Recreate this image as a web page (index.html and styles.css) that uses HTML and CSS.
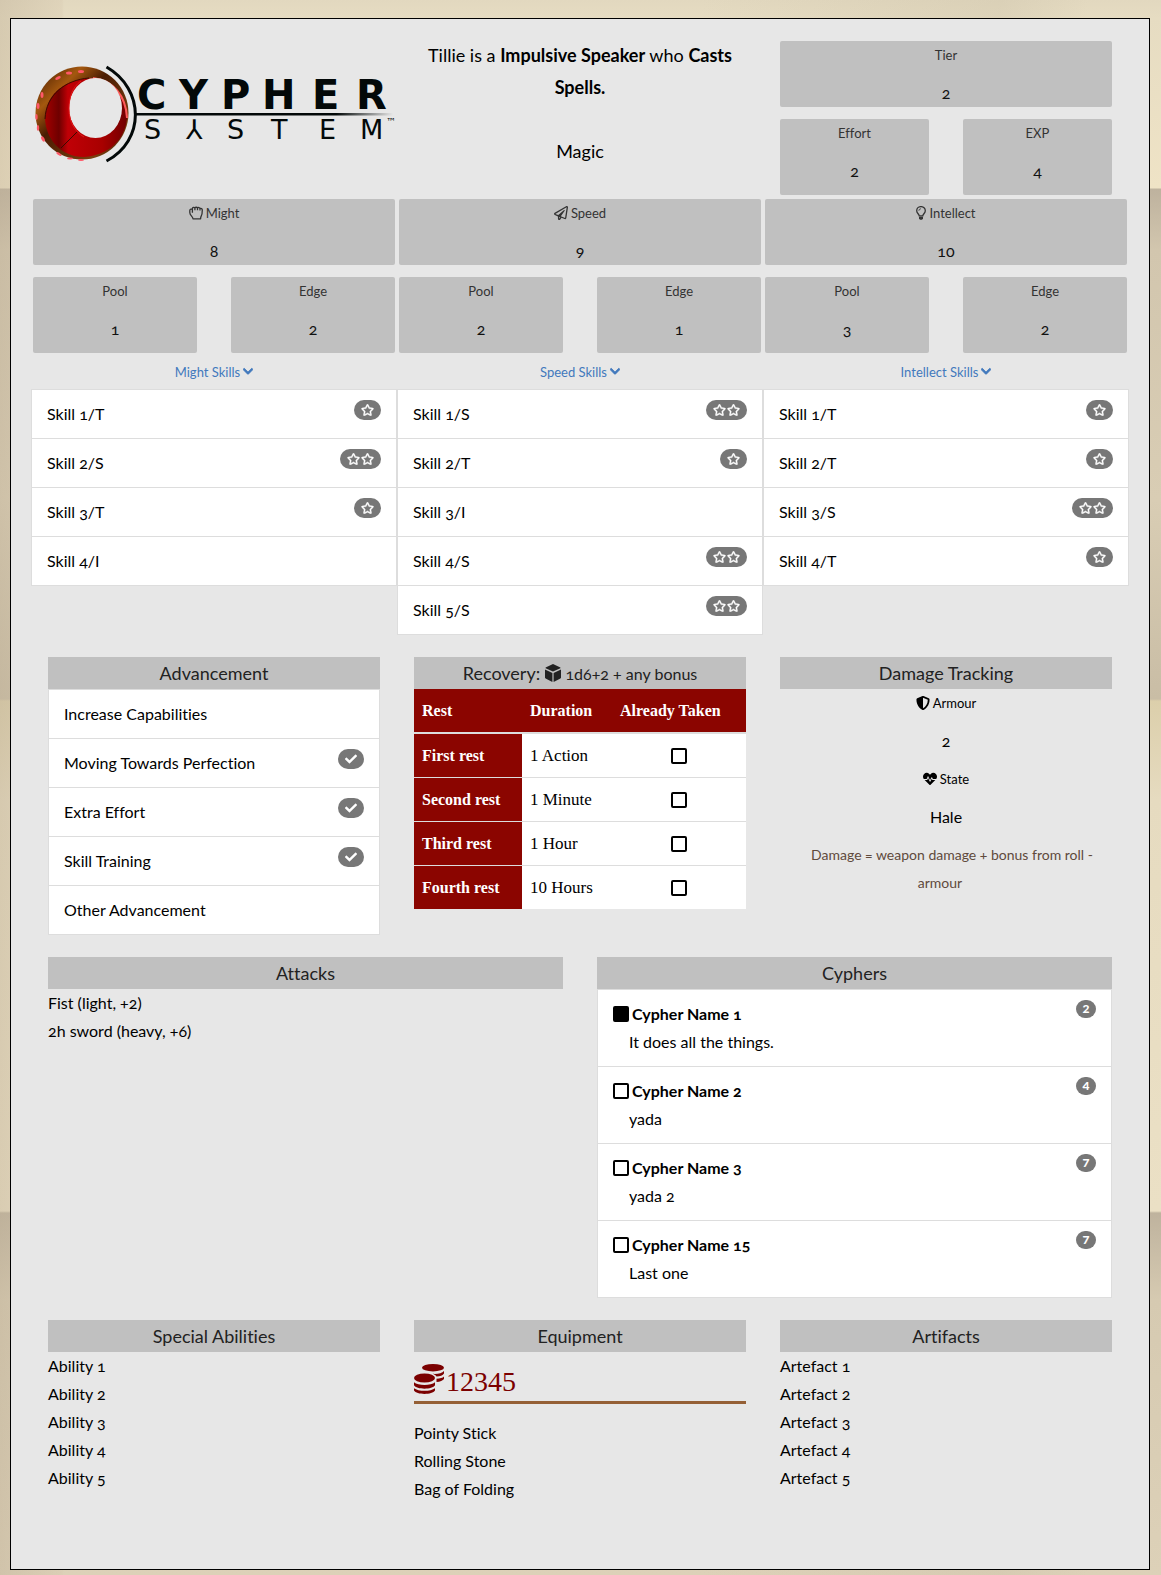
FILE: index.html
```html
<!DOCTYPE html>
<html lang="en">
<head>
<meta charset="utf-8">
<meta name="viewport" content="width=device-width, initial-scale=1">
<title>Cypher System Character Sheet</title>
<link rel="stylesheet" href="styles.css">
</head>
<body>
<svg class="sprite" aria-hidden="true">
  <symbol id="star" viewBox="0 0 576 512"><path stroke="currentColor" stroke-width="20" d="M528.1 171.5L382 150.2 316.7 17.8c-11.7-23.6-45.6-23.9-57.4 0L194 150.2 47.9 171.5c-26.2 3.8-36.7 36.1-17.7 54.6l105.7 103-25 145.5c-4.5 26.3 23.2 46 46.4 33.7L288 439.6l130.7 68.7c23.2 12.2 50.9-7.4 46.4-33.7l-25-145.5 105.7-103c19-18.5 8.5-50.8-17.7-54.6zM388.6 312.3l23.7 138.4L288 385.4l-124.3 65.3 23.7-138.4-100.6-98 139-20.2 62.2-126 62.2 126 139 20.2-100.6 98z"/></symbol>
  <symbol id="check" viewBox="0 0 512 512"><path d="M173.898 439.404l-166.4-166.4c-9.997-9.997-9.997-26.206 0-36.204l36.203-36.204c9.997-9.998 26.207-9.998 36.204 0L192 312.69 432.095 72.596c9.997-9.997 26.207-9.997 36.204 0l36.203 36.204c9.997 9.997 9.997 26.206 0 36.204l-294.4 294.401c-9.998 9.997-26.207 9.997-36.204-.001z"/></symbol>
  <symbol id="chevron" viewBox="0 0 448 512"><path stroke="currentColor" stroke-width="34" d="M207.029 351.476L12.686 157.132c-9.373-9.373-9.373-24.569 0-33.941l22.667-22.667c9.357-9.357 24.522-9.375 33.901-.04L224 254.505l154.745-154.021c9.379-9.335 24.544-9.317 33.901.04l22.667 22.667c9.373 9.373 9.373 24.569 0 33.941L240.971 351.476c-9.373 9.372-24.569 9.372-33.942 0z"/></symbol>
  <symbol id="shield" viewBox="0 0 512 512"><path d="M466.5 83.7l-192-80a48.15 48.15 0 0 0-36.9 0l-192 80C27.7 91.1 16 108.6 16 128c0 198.5 114.5 335.7 221.5 380.3 11.8 4.9 25.1 4.9 36.9 0C360.1 472.6 496 349.3 496 128c0-19.4-11.7-36.9-29.5-44.3zM256.1 446.3l-.1-381 175.9 73.3c-3.3 151.4-82.1 261.1-175.8 307.7z"/></symbol>
  <symbol id="heartbeat" viewBox="0 0 512 512"><path d="M320.2 243.8l-49.7 99.4c-6 12.1-23.4 11.7-28.9-.6l-56.9-126.3-30 71.7H60.6l182.5 186.5c7.1 7.3 18.6 7.3 25.7 0L451.4 288H342.3l-22.1-44.2zM473.7 73.9l-2.4-2.5c-51.5-52.6-135.8-52.6-187.4 0L256 100l-27.9-28.5c-51.5-52.7-135.9-52.7-187.4 0l-2.4 2.4C-10.4 123.7-12.5 203 31 256h102.4l35.9-86.2c5.4-12.9 23.6-13.1 29.3-.4l58.2 129.3 49-97.9c5.9-11.8 22.7-11.8 28.6 0l27.6 55.2H481c43.5-53 41.4-132.3-7.3-182.1z"/></symbol>
  <symbol id="plane" viewBox="0 0 512 512"><path d="M440 6.5L24 246.4c-34.4 19.9-31.1 70.8 5.7 85.9L144 379.6V464c0 46.4 59.2 65.5 86.6 28.6l43.8-59.1 111.9 46.2c5.9 2.4 12.1 3.6 18.3 3.6 8.2 0 16.3-2.1 23.6-6.2 12.8-7.2 21.6-20 23.9-34.5l59.4-387.2c6.1-40.1-36.9-68.8-71.5-48.9zM192 464v-64.6l36.6 15.1L192 464zm212.6-28.7l-153.8-63.5L391 169.5c10.7-15.5-9.5-33.5-23.7-21.2L155.8 332.6 48 288 464 48l-59.4 387.3z"/></symbol>
  <symbol id="fist" viewBox="0 0 14 14"><path d="M4 12.800C4 10.600.8 9.400.8 6.500V4.500c0-1.500 1.900-1.800 2.600-.8V2.500C3.500 1.200 5.300 1 5.900 2c.5-1 2.200-1 2.600 0 .6-.9 2.300-.6 2.500.6.9-.5 2.300 0 2.300 1.400 0 3.400-.1 4.500-1.100 6.100-.4.700-.6 1.500-.6 2.700zM5.900 2v2.300M8.500 2v2.300M11 2.600v1.800M3.400 3.700v3" fill="none" stroke="currentColor" stroke-width="1.300" stroke-linejoin="round"/></symbol>
  <symbol id="bulb" viewBox="0 0 10 14"><path d="M3.200 9.800C3 8 .7 7.200.7 4.700A4.300 4.100 0 0 1 9.300 4.700C9.300 7.200 7 8 6.800 9.800z" fill="none" stroke="currentColor" stroke-width="1.300"/><path d="M2.900 4.700c0-1.100.8-1.900 2-1.900" fill="none" stroke="currentColor" stroke-width=".9"/><path d="M3 10.800h4v1.600L6 13.800H4L3 12.400z"/></symbol>
  <symbol id="cube" viewBox="0 0 16 18"><path d="M8 0l7.400 3.400v.8L8 7.600.6 4.200v-.8zM0 5.400l7.400 3.500V18L.6 14.600 0 13.800zM16 5.400L8.600 8.900V18l6.800-3.400.6-.8z"/></symbol>
  <symbol id="coins" viewBox="0 0 30 30"><ellipse cx="19" cy="3.700" rx="11" ry="3.700"/><path d="M30 7v2.500c-1 1.800-4 2.900-7.500 3-.8-1.200-2-2-4-2.700 5 .4 9.500-.5 11.500-2.800zM30 12.500v2.500c-1 1.600-4 2.700-7.500 3v-3.200c3.500-.2 6.300-1 7.500-2.300z"/><ellipse cx="10.500" cy="14" rx="10.500" ry="4.600"/><path d="M0 18.300c4 3.600 17 3.600 21 0v3c-2.500 4.500-18.500 4.500-21 0zM0 24.300c4 3.400 17 3.400 21 0v2.300c-2.500 4.500-18.500 4.500-21 0z"/></symbol>
</svg>

<main class="sheet">
  <header class="columns">
    <div class="brand">
      <svg class="logo" viewBox="0 0 362 146" role="img" aria-label="Cypher System">
        <defs>
          <linearGradient id="bronze" x1="0" y1="0" x2="1" y2="1"><stop offset="0" stop-color="#3a1400"/><stop offset=".25" stop-color="#a4580f"/><stop offset=".42" stop-color="#4a1c02"/><stop offset=".8" stop-color="#7a3e0e"/><stop offset="1" stop-color="#2a0c00"/></linearGradient>
          <linearGradient id="core" x1="0" y1="0" x2="1" y2="0"><stop offset="0" stop-color="#a30000"/><stop offset=".17" stop-color="#6e0000"/><stop offset=".28" stop-color="#c00006"/><stop offset=".7" stop-color="#a80000"/><stop offset="1" stop-color="#700000"/></linearGradient>
          <linearGradient id="fade" x1="0" y1="0" x2="1" y2="0"><stop offset=".78" stop-color="#030909"/><stop offset="1" stop-color="#030909" stop-opacity="0"/></linearGradient>
        </defs>
        <circle cx="49" cy="72" r="46.500" fill="url(#bronze)"/>
        <path d="M12 76C14 50 34 38 60 37c20 2 33 18 34 40-2 22-18 37-43 39C28 116 12 98 12 76z" fill="url(#core)"/>
        <path d="M60 37c20 2 33 18 34 40" fill="none" stroke="#ff5a5a" stroke-width="2"/>
        <path d="M12 78C13 54 32 39 56 37M28 107L44 91" fill="none" stroke="#3a0c00" stroke-width="1"/>
        <ellipse cx="62.500" cy="67" rx="26.500" ry="30" fill="#e7e7e7"/>
        <path d="M48 40C39 46 36 57 36 68c0 13 6 23 15 28" fill="none" stroke="#e01818" stroke-width="1"/>
        <g fill="#ff5868"><ellipse cx="25" cy="37" rx="3" ry="1.500" transform="rotate(-25 25 37)"/><ellipse cx="36" cy="32" rx="3" ry="1.500"/><ellipse cx="48" cy="30.500" rx="3" ry="1.500"/><ellipse cx="9" cy="54" rx="1.500" ry="3"/><ellipse cx="5" cy="65" rx="1.500" ry="3"/><ellipse cx="3.500" cy="76" rx="1.200" ry="3"/><ellipse cx="5" cy="87" rx="1.200" ry="3"/><ellipse cx="10" cy="98" rx="1.500" ry="3" transform="rotate(-30 10 98)"/><ellipse cx="26" cy="113" rx="3" ry="1.200" transform="rotate(30 26 113)"/><ellipse cx="37" cy="117.500" rx="3" ry="1"/><ellipse cx="48" cy="119" rx="3" ry="1"/></g>
        <path d="M73.500 26C112 48 112 100 73.500 120" fill="none" stroke="#030909" stroke-width="3"/>
        <path d="M102 72h258v2.500H102z" fill="url(#fade)"/>
        <text class="logo-top" x="104 146 188 229 279 323" y="68">CYPHER</text>
        <text class="logo-bottom" x="111 153 194 238 286 327" y="98">S⅄STEM</text>
        <text class="logo-mark" x="353" y="84">™</text>
      </svg>
    </div>
    <div class="intro">
      <p>Tillie is a <strong>Impulsive Speaker</strong> who <strong>Casts Spells.</strong></p>
      <p>Magic</p>
    </div>
    <div class="rank">
      <dl class="tile"><dt>Tier</dt><dd>2</dd></dl>
      <div class="pair">
        <dl class="tile tile-tall"><dt>Effort</dt><dd>2</dd></dl>
        <dl class="tile tile-tall"><dt>EXP</dt><dd>4</dd></dl>
      </div>
    </div>
  </header>

  <section class="columns">
    <div>
      <div class="stat">
        <dl class="tile"><dt><svg class="icon"><use href="#fist"/></svg> Might</dt><dd>8</dd></dl>
        <div class="pair">
          <dl class="tile tile-tall"><dt>Pool</dt><dd>1</dd></dl>
          <dl class="tile tile-tall"><dt>Edge</dt><dd>2</dd></dl>
        </div>
      </div>
      <a class="toggle" href="#might-skills">Might Skills <svg class="icon icon-small"><use href="#chevron"/></svg></a>
      <ul class="list" id="might-skills">
        <li>Skill 1/T<span class="badge"><svg><use href="#star"/></svg></span></li>
        <li>Skill 2/S<span class="badge"><svg><use href="#star"/></svg><svg><use href="#star"/></svg></span></li>
        <li>Skill 3/T<span class="badge"><svg><use href="#star"/></svg></span></li>
        <li>Skill 4/I</li>
      </ul>
    </div>
    <div>
      <div class="stat">
        <dl class="tile"><dt><svg class="icon"><use href="#plane"/></svg> Speed</dt><dd>9</dd></dl>
        <div class="pair">
          <dl class="tile tile-tall"><dt>Pool</dt><dd>2</dd></dl>
          <dl class="tile tile-tall"><dt>Edge</dt><dd>1</dd></dl>
        </div>
      </div>
      <a class="toggle" href="#speed-skills">Speed Skills <svg class="icon icon-small"><use href="#chevron"/></svg></a>
      <ul class="list" id="speed-skills">
        <li>Skill 1/S<span class="badge"><svg><use href="#star"/></svg><svg><use href="#star"/></svg></span></li>
        <li>Skill 2/T<span class="badge"><svg><use href="#star"/></svg></span></li>
        <li>Skill 3/I</li>
        <li>Skill 4/S<span class="badge"><svg><use href="#star"/></svg><svg><use href="#star"/></svg></span></li>
        <li>Skill 5/S<span class="badge"><svg><use href="#star"/></svg><svg><use href="#star"/></svg></span></li>
      </ul>
    </div>
    <div>
      <div class="stat">
        <dl class="tile"><dt><svg class="icon icon-small"><use href="#bulb"/></svg> Intellect</dt><dd>10</dd></dl>
        <div class="pair">
          <dl class="tile tile-tall"><dt>Pool</dt><dd>3</dd></dl>
          <dl class="tile tile-tall"><dt>Edge</dt><dd>2</dd></dl>
        </div>
      </div>
      <a class="toggle" href="#intellect-skills">Intellect Skills <svg class="icon icon-small"><use href="#chevron"/></svg></a>
      <ul class="list" id="intellect-skills">
        <li>Skill 1/T<span class="badge"><svg><use href="#star"/></svg></span></li>
        <li>Skill 2/T<span class="badge"><svg><use href="#star"/></svg></span></li>
        <li>Skill 3/S<span class="badge"><svg><use href="#star"/></svg><svg><use href="#star"/></svg></span></li>
        <li>Skill 4/T<span class="badge"><svg><use href="#star"/></svg></span></li>
      </ul>
    </div>
  </section>

  <div class="panels thirds">
    <section>
      <h2>Advancement</h2>
      <ul class="list">
        <li>Increase Capabilities</li>
        <li>Moving Towards Perfection<span class="badge"><svg class="tick"><use href="#check"/></svg></span></li>
        <li>Extra Effort<span class="badge"><svg class="tick"><use href="#check"/></svg></span></li>
        <li>Skill Training<span class="badge"><svg class="tick"><use href="#check"/></svg></span></li>
        <li>Other Advancement</li>
      </ul>
    </section>
    <section>
      <h2>Recovery: <svg class="icon-cube"><use href="#cube"/></svg> <small>1d6+2 + any bonus</small></h2>
      <table class="rests">
        <thead><tr><th scope="col">Rest</th><th scope="col">Duration</th><th scope="col">Already Taken</th></tr></thead>
        <tbody>
          <tr><th scope="row"><label for="rest-1">First rest</label></th><td>1 Action</td><td><input class="box" type="checkbox" id="rest-1"></td></tr>
          <tr><th scope="row"><label for="rest-2">Second rest</label></th><td>1 Minute</td><td><input class="box" type="checkbox" id="rest-2"></td></tr>
          <tr><th scope="row"><label for="rest-3">Third rest</label></th><td>1 Hour</td><td><input class="box" type="checkbox" id="rest-3"></td></tr>
          <tr><th scope="row"><label for="rest-4">Fourth rest</label></th><td>10 Hours</td><td><input class="box" type="checkbox" id="rest-4"></td></tr>
        </tbody>
      </table>
    </section>
    <section>
      <h2>Damage Tracking</h2>
      <dl class="plain"><dt><svg class="icon"><use href="#shield"/></svg> Armour</dt><dd>2</dd></dl>
      <dl class="plain"><dt><svg class="icon"><use href="#heartbeat"/></svg> State</dt><dd>Hale</dd></dl>
      <p class="hint">Damage = weapon damage + bonus from roll - armour</p>
    </section>
  </div>

  <div class="panels halves">
    <section>
      <h2>Attacks</h2>
      <ul class="lines"><li>Fist (light, +2)</li><li>2h sword (heavy, +6)</li></ul>
    </section>
    <section>
      <h2>Cyphers</h2>
      <ul class="list cyphers">
        <li><div><label><input class="box" type="checkbox" checked> Cypher Name 1</label><p>It does all the things.</p></div><span class="badge count">2</span></li>
        <li><div><label><input class="box" type="checkbox"> Cypher Name 2</label><p>yada</p></div><span class="badge count">4</span></li>
        <li><div><label><input class="box" type="checkbox"> Cypher Name 3</label><p>yada 2</p></div><span class="badge count">7</span></li>
        <li><div><label><input class="box" type="checkbox"> Cypher Name 15</label><p>Last one</p></div><span class="badge count">7</span></li>
      </ul>
    </section>
  </div>

  <div class="panels thirds">
    <section>
      <h2>Special Abilities</h2>
      <ul class="lines"><li>Ability 1</li><li>Ability 2</li><li>Ability 3</li><li>Ability 4</li><li>Ability 5</li></ul>
    </section>
    <section>
      <h2>Equipment</h2>
      <h3 class="money"><svg><use href="#coins"/></svg>12345</h3>
      <ul class="lines"><li>Pointy Stick</li><li>Rolling Stone</li><li>Bag of Folding</li></ul>
    </section>
    <section>
      <h2>Artifacts</h2>
      <ul class="lines"><li>Artefact 1</li><li>Artefact 2</li><li>Artefact 3</li><li>Artefact 4</li><li>Artefact 5</li></ul>
    </section>
  </div>
</main>
</body>
</html>
```
FILE: styles.css
```css
* { box-sizing: border-box; }

body {
  margin: 0;
  padding: 18px 11px 5px 10px;
  color: #000;
  font: 16px/28px Lato, "Open Sans", sans-serif;
  font-variant-numeric: oldstyle-nums;
  font-variant-ligatures: none;
  background-color: #ded3b8;
  background-image:
    linear-gradient(90deg, rgba(190, 175, 150, .4) 0, rgba(215, 200, 175, .3) 62px, transparent 64px, transparent 700px, rgba(200, 190, 165, .3) 1000px, transparent 1088px),
    linear-gradient(#e2d8bf 0, #e6dcc2 18px, #efe3c6 188px, #beb29e 189px, #d2c6ae 250px, #d9cdb4 500px, #c9bda5 699px, #dccfab 701px, #e6dbc0 800px, #ebe0c5 1211px, #bfb39e 1213px, #d6cab1 1300px, #ddd1b8 1575px);
}

p, ul, dl, dd, h2, h3 { margin: 0; padding: 0; }
ul { list-style: none; }
svg { fill: currentColor; }
.sprite { display: none; }

.sheet {
  padding: 20px 20px 66px;
  border: 1px solid #000;
  background: #e7e7e7;
}

.columns {
  display: grid;
  grid-template-columns: repeat(3, minmax(0, 1fr));
}

.panels {
  display: grid;
  gap: 34px;
  padding: 0 17px;
  margin-top: 22px;
}
.thirds { grid-template-columns: repeat(3, minmax(0, 1fr)); }
.halves { grid-template-columns: repeat(2, minmax(0, 1fr)); }

.brand { padding: 2px; }
.logo { display: block; width: 100%; }
.logo text { fill: #030909; font-family: "DejaVu Sans", sans-serif; }
.logo .logo-top { font-size: 40px; font-weight: bold; }
.logo .logo-bottom { font-size: 27px; }
.logo .logo-mark { font-size: 10px; }

.intro {
  padding: 0 17px;
  font-size: 18px;
  line-height: 32px;
  text-align: center;
}
.intro p { margin-bottom: 32px; }
.intro p:last-child { margin-bottom: 0; }

.rank { padding: 2px 17px 4px; }
.stat { padding: 0 2px; }

.tile {
  border-radius: 2px;
  background: #c0c0c0;
  color: #111;
}
.tile-tall { padding-bottom: 10px; }
.pair {
  display: grid;
  grid-template-columns: 1fr 1fr;
  gap: 34px;
  margin-top: 12px;
}
dl { text-align: center; }
dt {
  display: flex;
  justify-content: center;
  align-items: center;
  gap: 3px;
  margin-bottom: 10px;
  font-size: 13px;
}
.tile dt { color: #333; }
.plain { padding-bottom: 10px; }

.icon { width: 14px; height: 14px; }
.icon-small { width: 10px; }
.icon-cube { width: 16px; height: 18px; vertical-align: -2px; }

.toggle {
  display: flex;
  justify-content: center;
  align-items: center;
  gap: 3px;
  padding: 5px 0 3px;
  color: #4279bd;
  font-size: 13px;
  text-decoration: none;
}

.list li {
  display: flex;
  justify-content: space-between;
  align-items: flex-start;
  padding: 10px 15px;
  border: 1px solid #ddd;
  border-bottom: 0;
  background: #fff;
}
.list li:last-child { border-bottom: 1px solid #ddd; }

.badge {
  display: flex;
  align-items: center;
  gap: 1px;
  height: 20px;
  padding: 0 7px;
  border-radius: 10px;
  background: #777;
  color: #fff;
}
.badge svg { width: 13px; height: 12px; }
.badge .tick { width: 12px; }
.count {
  justify-content: center;
  width: 20px;
  height: 18px;
  padding: 0;
  font-size: 12px;
  font-weight: 900;
  font-variant-numeric: lining-nums;
}

h2 {
  height: 32px;
  background: #c0c0c0;
  color: #222;
  font-size: 18px;
  font-weight: 400;
  line-height: 32px;
  text-align: center;
}
h2 small { font-size: 16px; }

.rests {
  width: 100%;
  border-collapse: separate;
  border-spacing: 0;
  background: #fff;
  font: 17px/28px "Liberation Serif", serif;
  text-align: left;
}
.rests th { background: #8b0500; color: #fff; font-size: 16px; }
.rests th, .rests td { height: 44px; padding: 0 8px; }
.rests thead th { height: 45px; border-bottom: 2px solid #ddd; }
.rests tbody tr:first-child > * { height: 43px; }
.rests tbody tr + tr > * { border-top: 1px solid #ddd; }
.rests th:first-child { width: 108px; }
.rests th:nth-child(2) { width: 90px; }
.rests td:last-child { line-height: 0; text-align: center; }

.box {
  appearance: none;
  width: 16px;
  height: 16px;
  margin: 0;
  border: 2px solid #000;
  border-radius: 2px;
  background: #fff;
}
.box:checked { background: #000; }

.cyphers label {
  display: flex;
  align-items: center;
  gap: 3px;
  font-weight: 700;
}
.cyphers p { padding-left: 16px; }

.hint {
  padding-right: 12px;
  color: #604a3c;
  font-size: 14px;
  text-align: center;
  text-indent: 24px;
}

.money {
  display: flex;
  align-items: flex-end;
  gap: 2px;
  height: 52px;
  padding-bottom: 7px;
  margin-bottom: 15px;
  border-bottom: 3px solid #956036;
  color: #7b0000;
  font: 28px/24px "Liberation Serif", serif;
}
.money svg { width: 30px; height: 30px; }
```
